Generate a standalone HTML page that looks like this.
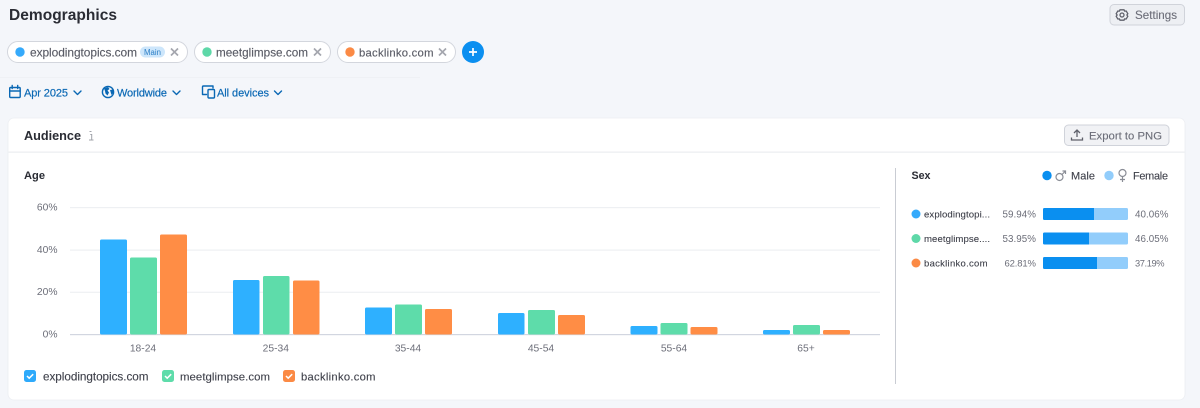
<!DOCTYPE html>
<html><head><meta charset="utf-8"><title>Demographics</title>
<style>
html,body{margin:0;padding:0;width:1200px;height:408px;overflow:hidden;background:#f4f6fa}
svg{display:block}
text{font-family:"Liberation Sans",sans-serif}
.g{font-size:10.300px;fill:#6c6e79}
.d{fill:#3f414b;stroke:#3f414b;stroke-width:.12}
.c{fill:#5a5c66;stroke:#5a5c66;stroke-width:.15}
.f{font-size:11px;fill:#0a68b4;stroke:#0a68b4;stroke-width:.18}
.s{font-size:9.600px;fill:#3c3e48;stroke:#3c3e48;stroke-width:.1}
.p{font-size:9.800px;fill:#6c6e79}
.btn{fill:#6c6e79;stroke:#6c6e79;stroke-width:.12}
.ic{fill:none;stroke:#0a68b4;stroke-width:1.400;stroke-linecap:round;stroke-linejoin:round}
.x{fill:none;stroke:#a4a6ae;stroke-width:1.700}
</style></head><body>
<svg width="1200" height="408" viewBox="0 0 1200 408" xmlns="http://www.w3.org/2000/svg">
<rect width="1200" height="408" fill="#f4f6fa"/>
<text x="9" y="20" font-size="15.500" font-weight="700" fill="#2a2c34" textLength="108">Demographics</text>

<rect x="1110" y="4.500" width="74.500" height="20.500" rx="4" fill="#edeff3" stroke="#d0d3da"/>
<g fill="none" stroke="#5f616b" stroke-width="1.300"><circle cx="1122" cy="15" r="2"/><path d="M1120 9.800h4l.6 1.300 1.600-.1 1.600 2.700-.9 1.300.9 1.300-1.600 2.700-1.600-.1-.6 1.300h-4l-.6-1.300-1.600.1-1.600-2.700.9-1.300-.9-1.300 1.600-2.700 1.600.1z"/></g>
<text x="1135" y="19" class="btn" font-size="11.600" textLength="42">Settings</text>

<rect x="7.500" y="41.500" width="180" height="21" rx="10.500" fill="#fff" stroke="#d3d6dd"/>
<circle cx="20" cy="52" r="4.700" fill="#35aafb"/>
<text x="30" y="56.300" class="c" font-size="11.900" textLength="107">explodingtopics.com</text>
<rect x="140" y="46.500" width="25" height="11" rx="5.500" fill="#cde6fb"/>
<text x="144" y="55" font-size="7.800" fill="#2a7ec6" textLength="17">Main</text>
<path class="x" d="M171 48.500l7 7M178 48.500l-7 7"/>

<rect x="194.500" y="41.500" width="136" height="21" rx="10.500" fill="#fff" stroke="#d3d6dd"/>
<circle cx="207" cy="52" r="4.700" fill="#5ed8a8"/>
<text x="216" y="56.300" class="c" font-size="11.700" textLength="92">meetglimpse.com</text>
<path class="x" d="M314 48.500l7 7M321 48.500l-7 7"/>

<rect x="337.500" y="41.500" width="118" height="21" rx="10.500" fill="#fff" stroke="#d3d6dd"/>
<circle cx="350" cy="52" r="4.700" fill="#fb8a45"/>
<text x="359" y="56.300" class="c" font-size="11.300" textLength="74.500">backlinko.com</text>
<path class="x" d="M439 48.500l7 7M446 48.500l-7 7"/>

<circle cx="473" cy="52" r="11" fill="#0b8ff0"/>
<path d="M473 48v8M469 52h8" stroke="#fff" stroke-width="1.700" fill="none"/>

<rect x="0" y="77" width="420" height="1" fill="#eff1f5"/>

<g class="ic"><rect x="9.700" y="87.500" width="10.500" height="10" rx="1"/><path d="M9.700 91h10.500M12.200 85.500v3M17.700 85.500v3"/></g>
<text x="24" y="96.500" class="f" textLength="44">Apr 2025</text>
<path class="ic" d="M74 91l3.500 3.500L81 91"/>
<g class="ic"><circle cx="108" cy="92" r="5.600"/></g>
<path d="M104 88.500l4-1.500 1.500 2-2 1.500 1.500 2-1.500 3-2-2-.5-2.500zM110 90l3-.5.500 3-2 2.500z" fill="#0a68b4"/>
<text x="117" y="96.500" class="f" textLength="50">Worldwide</text>
<path class="ic" d="M173 91l3.500 3.500L180 91"/>
<g class="ic"><path d="M206.500 94.500h-4v-7.500c0-.6.400-1 1-1h9.500v2"/><rect x="208" y="89.500" width="6.500" height="8.500" rx="1"/></g>
<text x="217" y="96.500" class="f" textLength="52">All devices</text>
<path class="ic" d="M274.500 91l3.500 3.500 3.500-3.500"/>

<rect x="8" y="118" width="1177" height="282" rx="6" fill="#fff" stroke="#eceef2" stroke-width=".8"/>
<rect x="8.500" y="151.500" width="1176" height="1.300" fill="#eceef2"/>
<text x="24" y="140" font-size="12.700" font-weight="700" fill="#2a2c34" textLength="57">Audience</text>
<path d="M89.500 131.500h2M90.300 134.500h1.400v5.500M89 140h4.500" fill="none" stroke="#a0a3aa" stroke-width="1"/>

<rect x="1064.500" y="125" width="104.500" height="20.500" rx="4" fill="#f1f2f5" stroke="#d0d3da"/>
<path d="M1077 137v-6.500M1074 133l3-3 3 3M1071.500 137.500v2.500h11v-2.500" fill="none" stroke="#5f616b" stroke-width="1.300"/>
<text x="1089" y="139.500" class="btn" font-size="11.300" textLength="73">Export to PNG</text>

<text x="24" y="179" font-size="11.100" font-weight="700" fill="#2a2c34" textLength="21">Age</text>

<g fill="#eef0f3"><rect x="70" y="207" width="810" height="1.200"/><rect x="70" y="249.500" width="810" height="1.200"/><rect x="70" y="291.700" width="810" height="1.200"/></g>
<rect x="70" y="334" width="810" height="1.200" fill="#d2d6e0"/>
<g class="g" text-anchor="end"><text x="57.500" y="210.500">60%</text><text x="57.500" y="253">40%</text><text x="57.500" y="295">20%</text><text x="57.500" y="337.500">0%</text></g>

<g fill="#2eb0ff">
<rect x="100" y="239.500" width="27" height="95" rx="1.500"/><rect x="233" y="280" width="26.500" height="54.500" rx="1.500"/><rect x="365" y="307.500" width="27" height="27" rx="1.500"/><rect x="498" y="313" width="26.500" height="21.500" rx="1.500"/><rect x="630.500" y="326" width="27" height="8.500" rx="1.500"/><rect x="763" y="330" width="27" height="4.500" rx="1.500"/>
</g>
<g fill="#5edcaa">
<rect x="130" y="257.500" width="27" height="77" rx="1.500"/><rect x="263" y="276" width="26.500" height="58.500" rx="1.500"/><rect x="395" y="304.500" width="27" height="30" rx="1.500"/><rect x="528" y="310" width="27" height="24.500" rx="1.500"/><rect x="660.500" y="323" width="27" height="11.500" rx="1.500"/><rect x="793" y="325" width="27" height="9.500" rx="1.500"/>
</g>
<g fill="#ff8d45">
<rect x="160" y="234.500" width="27" height="100" rx="1.500"/><rect x="293" y="280.500" width="26.500" height="54" rx="1.500"/><rect x="425" y="309" width="27" height="25.500" rx="1.500"/><rect x="558" y="315" width="27" height="19.500" rx="1.500"/><rect x="690.500" y="327" width="27" height="7.500" rx="1.500"/><rect x="823" y="330" width="27" height="4.500" rx="1.500"/>
</g>

<g class="g" text-anchor="middle"><text x="143" y="351.500">18-24</text><text x="275.800" y="351.500">25-34</text><text x="408" y="351.500">35-44</text><text x="541" y="351.500">45-54</text><text x="674" y="351.500">55-64</text><text x="806" y="351.500">65+</text></g>

<rect x="24" y="370" width="12" height="12" rx="2.500" fill="#2eaafb"/>
<path d="M27 376l2.200 2.200 4-4" fill="none" stroke="#fff" stroke-width="1.500"/>
<text x="43" y="380.300" class="d" font-size="11.700" textLength="105.500">explodingtopics.com</text>
<rect x="162" y="370" width="12" height="12" rx="2.500" fill="#5edcaa"/>
<path d="M165 376l2.200 2.200 4-4" fill="none" stroke="#fff" stroke-width="1.500"/>
<text x="180" y="380.300" class="d" font-size="11.400" textLength="90">meetglimpse.com</text>
<rect x="283" y="370" width="12" height="12" rx="2.500" fill="#fb8a45"/>
<path d="M286 376l2.200 2.200 4-4" fill="none" stroke="#fff" stroke-width="1.500"/>
<text x="301" y="380.300" class="d" font-size="11.200" textLength="74.500">backlinko.com</text>

<rect x="895" y="168" width="1" height="216" fill="#c9ccd3"/>

<text x="911.500" y="179" font-size="10.700" font-weight="700" fill="#2a2c34" textLength="19">Sex</text>
<circle cx="1047" cy="175.500" r="4.700" fill="#0a8ff0"/>
<g fill="none" stroke="#8a8d96" stroke-width="1.200"><circle cx="1059.500" cy="177" r="3.500"/><path d="M1062 174.500l3.500-3.500M1062.500 171h3v3"/></g>
<text x="1071" y="179.500" class="d" font-size="11" textLength="24">Male</text>
<circle cx="1109" cy="175.500" r="4.700" fill="#92cdfb"/>
<g fill="none" stroke="#8a8d96" stroke-width="1.200"><circle cx="1122.500" cy="173" r="3.500"/><path d="M1122.500 176.500v5.500M1120 179.500h5"/></g>
<text x="1133" y="179.500" class="d" font-size="10.900" textLength="35">Female</text>

<circle cx="916" cy="214" r="4.500" fill="#35aafb"/>
<text x="924" y="217.500" class="s" textLength="66">explodingtopi...</text>
<text x="1002.500" y="217.500" class="p" textLength="33.500">59.94%</text>
<rect x="1043" y="208" width="85" height="12" rx="1.500" fill="#92cdfb"/><path d="M1044.500 208H1094v12h-49.500a1.500 1.500 0 0 1-1.500-1.500v-9a1.500 1.500 0 0 1 1.500-1.500z" fill="#0a8ff0"/>
<text x="1135" y="217.500" class="p" textLength="33.500">40.06%</text>

<circle cx="916" cy="238.500" r="4.500" fill="#5ed8a8"/>
<text x="924" y="242" class="s" textLength="66">meetglimpse....</text>
<text x="1002.500" y="242" class="p" textLength="33.500">53.95%</text>
<rect x="1043" y="232.500" width="85" height="12" rx="1.500" fill="#92cdfb"/><path d="M1044.500 232.500H1089v12h-44.500a1.500 1.500 0 0 1-1.500-1.500v-9a1.500 1.500 0 0 1 1.500-1.500z" fill="#0a8ff0"/>
<text x="1135" y="242" class="p" textLength="33.500">46.05%</text>

<circle cx="916" cy="263" r="4.500" fill="#fb8a45"/>
<text x="924" y="266.500" class="s" style="font-size:9.500px" textLength="63.500">backlinko.com</text>
<text x="1004.500" y="266.500" class="p" style="font-size:9.500px" textLength="31.500">62.81%</text>
<rect x="1043" y="257" width="85" height="12" rx="1.500" fill="#92cdfb"/><path d="M1044.500 257H1097v12h-52.500a1.500 1.500 0 0 1-1.500-1.500v-9a1.500 1.500 0 0 1 1.500-1.500z" fill="#0a8ff0"/>
<text x="1135" y="266.500" class="p" style="font-size:9.300px" textLength="29.500">37.19%</text>
</svg>
</body></html>
